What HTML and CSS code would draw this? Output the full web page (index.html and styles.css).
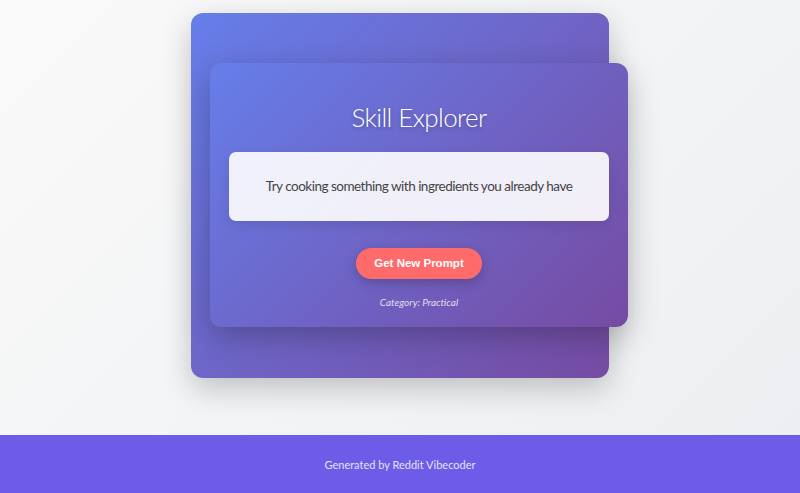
FILE: index.html
```html
<!DOCTYPE html>
<html>
<head>
<meta charset="utf-8">
<link rel="stylesheet" href="styles.css">
</head>
<body>
<main class="stage">
  <div class="back-card">
    <section class="card">
      <h1 class="title">Skill Explorer</h1>
      <div class="prompt">Try cooking something with ingredients you already have</div>
      <button class="btn">Get New Prompt</button>
      <p class="category">Category: Practical</p>
    </section>
  </div>
</main>
<footer class="footer">Generated by Reddit Vibecoder</footer>
</body>
</html>
```
FILE: styles.css
```css
* { box-sizing: border-box; }
html, body { margin: 0; padding: 0; }
body {
  width: 800px;
  height: 493px;
  display: flex;
  flex-direction: column;
  font-family: "Lato", "Open Sans", sans-serif;
  background: linear-gradient(135deg, #fafafa 0%, #eceef1 100%);
  overflow: hidden;
}
.stage {
  flex: 1;
  display: flex;
  justify-content: center;
  align-items: flex-start;
  padding-top: 13px;
}
.back-card {
  width: 418px;
  height: 365px;
  border-radius: 12px;
  background: linear-gradient(135deg, #667eea 0%, #764ba2 100%);
  box-shadow: 0 10px 30px rgba(0,0,0,0.22);
  padding-top: 50px;
}
.card {
  width: 418px;
  height: 264px;
  margin-left: 19px;
  border-radius: 12px;
  background: linear-gradient(135deg, #667eea 0%, #764ba2 100%);
  box-shadow: 0 10px 30px rgba(0,0,0,0.25);
  padding: 37px 19px 18px;
  display: flex;
  flex-direction: column;
  align-items: center;
  text-align: center;
}
.title {
  margin: 0 0 18px;
  font-size: 26px;
  line-height: 34px;
  letter-spacing: -0.6px;
  font-weight: 300;
  color: #fff;
  text-shadow: 0 2px 4px rgba(0,0,0,0.25);
}
.prompt {
  width: 100%;
  height: 69px;
  background: rgba(255,255,255,0.9);
  border-radius: 7px;
  padding: 25px 10px;
  font-size: 13.5px;
  line-height: 19px;
  letter-spacing: -0.5px;
  white-space: nowrap;
  color: #444;
  box-shadow: 0 4px 12px rgba(0,0,0,0.1);
}
.btn {
  margin-top: 27px;
  border: none;
  background: #ff6b6b;
  color: #fff;
  font-family: "Liberation Sans", Arial, sans-serif;
  font-weight: 700;
  font-size: 11.5px;
  line-height: 15px;
  padding: 8px 18px;
  border-radius: 16px;
  box-shadow: 0 4px 12px rgba(0,0,0,0.2);
}
.category {
  margin: 16px 0 0;
  font-size: 10px;
  line-height: 14px;
  font-style: italic;
  color: rgba(255,255,255,0.8);
}
.footer {
  height: 58px;
  background: #6c5ce7;
  color: #e6e1ff;
  font-family: "Lato", "Open Sans", sans-serif;
  font-size: 11px;
  display: flex;
  align-items: center;
  justify-content: center;
}
```
